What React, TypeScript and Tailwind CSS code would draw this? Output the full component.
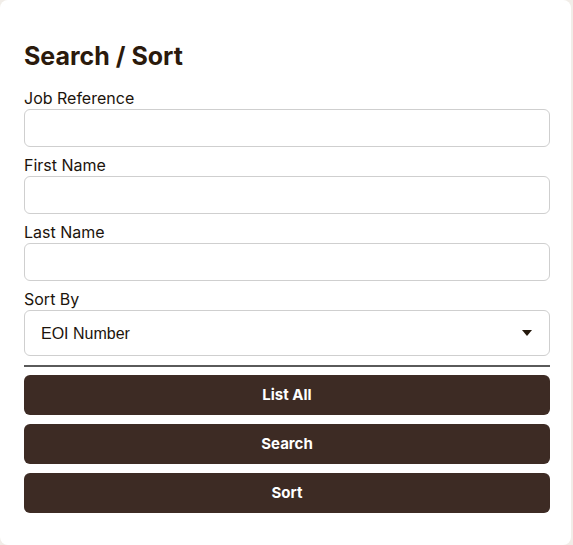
import React, { useState } from 'react';

const fields = [
    { id: 'jobRef', label: 'Job Reference' },
    { id: 'firstName', label: 'First Name' },
    { id: 'lastName', label: 'Last Name' },
];

const sortOptions = [
    { value: 'eoi', label: 'EOI Number' },
    { value: 'jobRef', label: 'Job Reference' },
    { value: 'firstName', label: 'First Name' },
    { value: 'lastName', label: 'Last Name' },
];

export default function App() {
    const [values, setValues] = useState<Record<string, string>>({});
    const [sortBy, setSortBy] = useState('eoi');
    const [open, setOpen] = useState(false);
    const current = sortOptions.find(o => o.value === sortBy);

    return (
        <div className="min-h-screen w-full bg-[#f1ede8] font-['Inter',sans-serif] overflow-hidden">
            <div className="w-[571px] min-h-[545px] bg-white rounded-lg pl-6 pr-[21px] pt-10 pb-8">
                <h1 className="text-[25px] font-bold text-[#2b1a0c] mb-[13px] leading-8">Search / Sort</h1>

                {fields.map(f => (
                    <div key={f.id} className="mb-[5px]">
                        <label htmlFor={f.id} className="block text-base leading-[22px] pt-[2px] text-[#1c140c]">{f.label}</label>
                        <input
                            id={f.id}
                            value={values[f.id] || ''}
                            onChange={e => setValues({ ...values, [f.id]: e.target.value })}
                            className="block w-full h-[38px] border border-[#cfcfcf] rounded-md px-3 outline-none bg-white"
                        />
                    </div>
                ))}

                <label htmlFor="sortBy" className="block text-base leading-[22px] pt-[2px] text-[#1c140c]">Sort By</label>
                <div className="relative">
                    <button
                        id="sortBy"
                        type="button"
                        onClick={() => setOpen(!open)}
                        className="w-full h-[46px] border border-[#cfcfcf] rounded-md bg-white flex items-center justify-between pl-4 pr-[17px] text-left"
                    >
                        <span className="pt-[2px] text-base text-[#1c140c] font-['Liberation_Sans',sans-serif]">{current?.label}</span>
                        <svg width="10" height="6" viewBox="0 0 10 6">
                            <path d="M0 0 L10 0 L5 6 Z" fill="#24180c" />
                        </svg>
                    </button>
                    {open && (
                        <div className="absolute left-0 right-0 top-[48px] z-10 bg-white border border-[#cfcfcf] rounded-md shadow-md py-1">
                            {sortOptions.map(o => (
                                <button
                                    key={o.value}
                                    type="button"
                                    onClick={() => { setSortBy(o.value); setOpen(false); }}
                                    className="block w-full text-left px-4 py-1.5 text-base text-[#1c140c] hover:bg-[#f1ede8] font-['Liberation_Sans',sans-serif]"
                                >
                                    {o.label}
                                </button>
                            ))}
                        </div>
                    )}
                </div>

                <hr className="mt-[9px] mb-2 border-0 border-t-2 border-[#5a5a5a]" />

                <div className="flex flex-col gap-[9px]">
                    {['List All', 'Search', 'Sort'].map(b => (
                        <button key={b} className="h-10 w-full rounded-md bg-[#3d2b24] text-white text-[15px] font-bold">{b}</button>
                    ))}
                </div>
            </div>
        </div>
    );
}
